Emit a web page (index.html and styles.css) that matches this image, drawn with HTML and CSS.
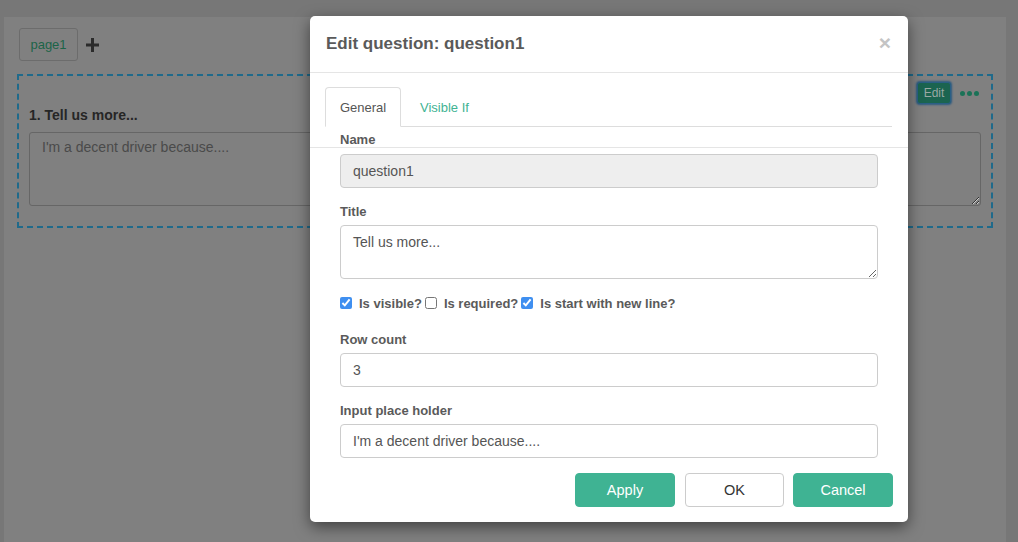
FILE: index.html
```html
<!DOCTYPE html>
<html lang="en">
<head>
<meta charset="utf-8">
<title>Edit question</title>
<link rel="stylesheet" href="styles.css">
</head>
<body>
<div class="editor">
  <div class="panel">
    <div class="pages">
      <button class="page-tab">page1</button>
      <svg class="plus" width="13" height="14" viewBox="0 0 13 14"><path d="M5 0h3v5.5h5v3H8V14H5V8.5H0v-3h5z" fill="#2b2b2b"/></svg>
    </div>
    <div class="question-box">
      <div class="q-toolbar">
        <button class="edit-btn">Edit</button>
        <span class="dots"><i></i><i></i><i></i></span>
      </div>
      <div class="q-title">1. Tell us more...</div>
      <textarea class="q-input" placeholder="I'm a decent driver because...."></textarea>
    </div>
  </div>
</div>

<div class="modal">
  <div class="modal-header">
    <h4 class="modal-title">Edit question: question1</h4>
    <span class="close">×</span>
  </div>
  <div class="tabs-wrap">
    <ul class="tabs">
      <li class="tab active">General</li>
      <li class="tab link">Visible If</li>
    </ul>
  </div>
  <div class="form">
    <div class="label first">Name</div>
    <div class="divider"></div>
    <input class="control readonly" value="question1" readonly>
    <div class="label">Title</div>
    <textarea class="control area">Tell us more...</textarea>
    <div class="checks">
      <label class="check"><input type="checkbox" checked><span>Is visible?</span></label>
      <label class="check"><input type="checkbox"><span>Is required?</span></label>
      <label class="check"><input type="checkbox" checked><span>Is start with new line?</span></label>
    </div>
    <div class="label gap">Row count</div>
    <input class="control" value="3">
    <div class="label">Input place holder</div>
    <input class="control" value="I'm a decent driver because....">
  </div>
  <div class="footer">
    <button class="btn primary">Apply</button>
    <button class="btn default">OK</button>
    <button class="btn primary cancel">Cancel</button>
  </div>
</div>
</body>
</html>
```

FILE: styles.css
```css
html, body {
  margin: 0;
  padding: 0;
}
body {
  font-family: "Liberation Sans", Arial, sans-serif;
  width: 1018px;
  height: 542px;
  overflow: hidden;
  position: relative;
  background: #777777;
}
.editor {
  height: 542px;
  box-sizing: border-box;
  padding: 17px 12px 0 4px;
  background: #777777;
}
.panel {
  height: 100%;
  box-sizing: border-box;
  background: #808080;
  padding: 11px 13px 0 13px;
}
.pages {
  display: flex;
  align-items: center;
  gap: 8px;
  padding-left: 2px;
}
.page-tab {
  height: 33px;
  width: 59px;
  box-sizing: border-box;
  border: 1px solid #6c6c6c;
  border-radius: 3px;
  background: #808080;
  color: #1c6448;
  font-family: "Liberation Sans", Arial, sans-serif;
  font-size: 13px;
  padding: 0;
}
.plus {
  display: block;
  margin-top: 1px;
}
.question-box {
  margin-top: 13px;
  height: 154px;
  box-sizing: border-box;
  border: 2px dashed #1f6a8b;
  padding: 6px 10px 20px 10px;
}
.q-toolbar {
  display: flex;
  justify-content: flex-end;
  align-items: center;
  gap: 9px;
  padding-right: 2px;
  height: 22px;
}
.edit-btn {
  width: 34px;
  height: 22px;
  box-sizing: border-box;
  border: 1px solid #2a5f86;
  box-shadow: 0 0 2px 1px #2b5a80;
  border-radius: 3px;
  background: #1b6450;
  color: #9aa8a4;
  font-family: "Liberation Sans", Arial, sans-serif;
  font-size: 12px;
  padding: 0;
}
.dots {
  display: flex;
  gap: 2px;
  margin-top: 1px;
}
.dots i {
  width: 5px;
  height: 5px;
  border-radius: 50%;
  background: #1b7257;
}
.q-title {
  margin-top: 1px;
  line-height: 20px;
  font-size: 14px;
  font-weight: bold;
  color: #262626;
}
.q-input {
  display: block;
  margin-top: 7px;
  width: 100%;
  height: 74px;
  box-sizing: border-box;
  border: 1px solid #666666;
  border-radius: 3px;
  background: #808080;
  padding: 6px 12px;
  font-family: "Liberation Sans", Arial, sans-serif;
  font-size: 14px;
  resize: vertical;
}
.q-input::placeholder {
  color: #4a4a4a;
}

/* modal (overlays the editor) */
.modal {
  position: absolute;
  left: 310px;
  top: 16px;
  width: 598px;
  height: 506px;
  box-sizing: border-box;
  background: #ffffff;
  border-radius: 5px;
  box-shadow: 0 5px 15px rgba(0, 0, 0, 0.5);
  display: flex;
  flex-direction: column;
}
.modal-header {
  height: 56px;
  box-sizing: content-box;
  border-bottom: 1px solid #e5e5e5;
  display: flex;
  align-items: center;
  justify-content: space-between;
  padding: 0 17px 0 16px;
}
.modal-title {
  margin: 0;
  font-size: 17px;
  font-weight: bold;
  color: #5a5a5a;
}
.close {
  font-size: 21px;
  font-weight: bold;
  color: #c4c4c4;
  line-height: 1;
  margin-top: -4px;
}
.tabs-wrap {
  padding: 14px 16px 0 15px;
}
.tabs {
  list-style: none;
  margin: 0;
  padding: 0;
  display: flex;
  height: 39px;
  border-bottom: 1px solid #dddddd;
}
.tab {
  height: 40px;
  box-sizing: border-box;
  display: flex;
  align-items: center;
  justify-content: center;
  font-size: 13px;
}
.tab.active {
  width: 76px;
  border: 1px solid #dddddd;
  border-bottom-color: #ffffff;
  border-radius: 4px 4px 0 0;
  color: #555555;
  background: #ffffff;
}
.tab.link {
  padding: 0 15px;
  margin-left: 4px;
  color: #3fb393;
}
.form {
  padding: 0 30px;
}
.label {
  margin-top: 16px;
  margin-bottom: 6px;
  line-height: 15px;
  font-size: 13px;
  font-weight: bold;
  color: #5a5a5a;
}
.label.first {
  margin-top: 5px;
  margin-bottom: 0;
}
.label.gap {
  margin-top: 20px;
}
.divider {
  margin: 0 -30px 6px -30px;
  border-top: 1px solid #e5e5e5;
}
.control {
  display: block;
  width: 100%;
  height: 34px;
  box-sizing: border-box;
  border: 1px solid #cccccc;
  border-radius: 4px;
  padding: 6px 12px;
  font-family: "Liberation Sans", Arial, sans-serif;
  font-size: 14px;
  color: #555555;
  background: #ffffff;
  outline: none;
}
.control.readonly {
  background: #eeeeee;
}
.control.area {
  height: 54px;
  resize: vertical;
  padding-top: 8px;
}
.checks {
  margin-top: 15px;
  height: 18px;
  display: flex;
  align-items: center;
}
.check {
  display: inline-flex;
  align-items: center;
  margin-right: 3px;
  font-size: 13px;
  font-weight: bold;
  color: #5a5a5a;
}
.check input {
  width: 12px;
  height: 12px;
  margin: 0 7px 0 0;
  accent-color: #3f8ff0;
}
.footer {
  margin-top: 15px;
  padding: 0 15px 0 0;
  display: flex;
  justify-content: flex-end;
  gap: 10px;
}
.btn {
  height: 34px;
  box-sizing: border-box;
  border-radius: 4px;
  font-family: "Liberation Sans", Arial, sans-serif;
  font-size: 14.5px;
  padding: 0;
}
.btn.primary {
  width: 100px;
  background: #3fb393;
  border: 1px solid #3fb393;
  color: #ffffff;
}
.btn.default {
  width: 99px;
  background: #ffffff;
  border: 1px solid #cccccc;
  color: #333333;
}
.btn.cancel {
  margin-left: -1px;
}
```
